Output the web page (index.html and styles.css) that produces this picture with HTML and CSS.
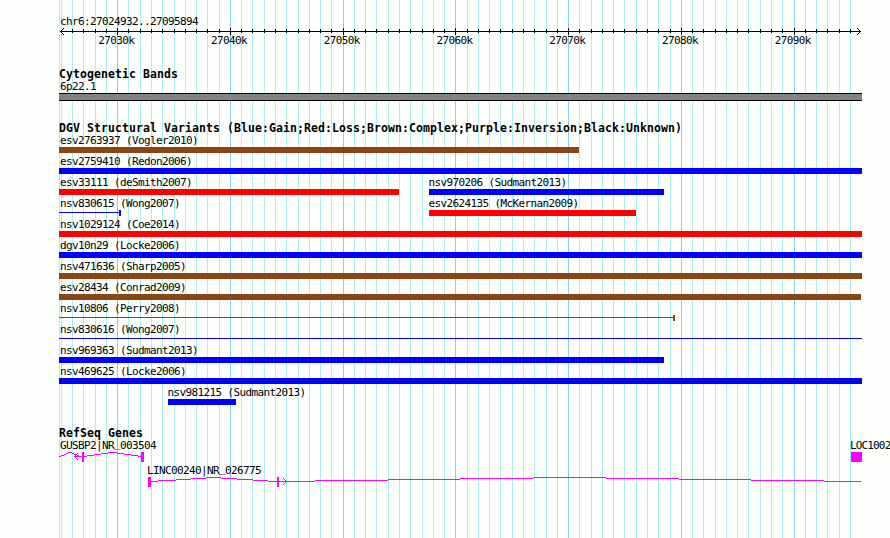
FILE: index.html
```html
<!DOCTYPE html>
<html lang="en">

<head>
    <meta charset="UTF-8">
    <title>chr6:27024932..27095894</title>
    <link rel="stylesheet" href="styles.css">
</head>

<body>
    <div class="browser">
        <svg class="gridlines" id="gridlines" width="890" height="538" shape-rendering="crispEdges"></svg>

        <div class="ruler">
            <div class="label">chr6:27024932..27095894</div>
            <svg class="axis" id="axis" width="803" height="7" shape-rendering="crispEdges">
                <path d="M1 3h801v1h-801z" />
                <path d="M2 2h1v1h-1zM3 1h1v1h-1zM4 0h1v1h-1zM2 4h1v1h-1zM3 5h1v1h-1zM4 6h1v1h-1z" />
                <path d="M800 2h1v1h-1zM799 1h1v1h-1zM798 0h1v1h-1zM800 4h1v1h-1zM799 5h1v1h-1zM798 6h1v1h-1z" />
            </svg>
            <div class="ticks">
                <span class="label">27030k</span>
                <span class="label">27040k</span>
                <span class="label">27050k</span>
                <span class="label">27060k</span>
                <span class="label">27070k</span>
                <span class="label">27080k</span>
                <span class="label">27090k</span>
            </div>
        </div>

        <div class="track cytoband">
            <h2>Cytogenetic Bands</h2>
            <div class="label">6p22.1</div>
            <div class="band"></div>
        </div>

        <div class="track variants">
            <h2>DGV Structural Variants (Blue:Gain;Red:Loss;Brown:Complex;Purple:Inversion;Black:Unknown)</h2>
            <div id="variants"></div>
        </div>

        <div class="track genes">
            <h2>RefSeq Genes</h2>
            <div class="gene-row">
                <span class="label">GUSBP2|NR<span class="low">_</span>003504</span>
                <span class="label">LOC1002</span>
            </div>
            <svg class="gene" width="803" height="12" shape-rendering="crispEdges">
                <path d="M0 4h2v1h-2zM2 3h3v1h-3zM5 2h2v1h-2zM7 1h2v1h-2zM9 0h4v1h-4zM13 1h2v1h-2zM15 2h3v1h-3zM18 3h2v1h-2zM15 4h8v1h-8z" />
                <path d="M16 3h1v1h-1zM17 2h1v1h-1zM18 1h1v1h-1zM16 5h1v1h-1zM17 6h1v1h-1zM18 7h1v1h-1z" />
                <path d="M25 4h3v1h-3zM28 3h7v1h-7zM35 2h7v1h-7zM42 1h7v1h-7zM49 0h9v1h-9zM58 1h7v1h-7zM65 2h7v1h-7zM72 3h7v1h-7zM79 4h3v1h-3z" />
                <path d="M23 0h2v10h-2zM82 0h3v10h-3zM792 0h11v10h-11z" />
            </svg>
            <div class="gene-row second">
                <span class="label">LINC00240|NR<span class="low">_</span>026775</span>
            </div>
            <svg class="gene" width="803" height="12" shape-rendering="crispEdges">
                <path d="M92 4h7v1h-7zM99 3h18v1h-18zM117 2h15v1h-15zM132 1h15v1h-15zM147 0h15v1h-15zM162 1h16v1h-16zM178 2h16v1h-16zM194 3h15v1h-15zM209 4h9v1h-9z" />
                <path d="M220 4h36v1h-36zM256 3h73v1h-73zM329 2h72v1h-72zM401 1h73v1h-73zM474 0h73v1h-73zM547 1h73v1h-73zM620 2h72v1h-72zM692 3h73v1h-73zM765 4h37v1h-37z" />
                <path d="M224 1h1v1h-1zM225 2h1v1h-1zM226 3h1v1h-1zM227 4h1v1h-1zM226 5h1v1h-1zM225 6h1v1h-1zM224 7h1v1h-1z" />
                <path d="M89 0h3v10h-3zM218 0h2v10h-2z" />
            </svg>
        </div>
    </div>

    <script src="script.js"></script>
</body>

</html>
```
FILE: styles.css
```css
body {
    margin: 0;
    background-color: #fdfffc;
    color: #000;
    font-family: "DejaVu Sans Mono", monospace;
}

.browser {
    position: relative;
    width: 831px;
    height: 538px;
    padding-left: 59px;
    overflow: hidden;
}

svg {
    display: block;
}

.gridlines {
    position: absolute;
    top: 0;
    left: 0;
    z-index: -1;
}

.gridlines .minor {
    fill: #afeeee;
}

.gridlines .major {
    fill: #87ceeb;
}

.label {
    display: block;
    height: 13px;
    padding-left: 1px;
    font-size: 11px;
    line-height: 13px;
    letter-spacing: -0.622px;
    white-space: nowrap;
}

h2 {
    height: 13px;
    margin: 0;
    font-size: 11.5px;
    line-height: 15px;
    letter-spacing: 0.077px;
    white-space: nowrap;
}

/* ruler */
.ruler {
    box-sizing: border-box;
    height: 67px;
    padding-top: 15px;
}

.ticks {
    display: flex;
    padding-left: 1px;
}

.ticks .label {
    flex: none;
    width: 112.74px;
    padding: 0;
    line-height: 11px;
    text-align: center;
}

/* tracks */
.cytoband {
    height: 54px;
}

.band {
    width: 803px;
    height: 6px;
    border-top: 1px solid #000;
    border-bottom: 1px solid #000;
    background-color: #848284;
}

.variants {
    height: 305px;
}

.row {
    display: flex;
    height: 21px;
}

.feature {
    flex: none;
}

.feature.inside .label {
    padding-left: 0;
    margin-left: -0.5px;
}

.bar {
    height: 6px;
    background-color: currentColor;
}

.line {
    display: flex;
    align-items: flex-start;
    height: 6px;
}

.line::before {
    content: "";
    flex: 1;
    height: 1px;
    margin-top: 2px;
    background-color: currentColor;
}

.line.capped::after {
    content: "";
    width: 2px;
    height: 6px;
    background-color: currentColor;
}

.gain {
    color: #00f;
}

.loss {
    color: #f00;
}

.complex {
    color: #8b4513;
}

/* genes */
.gene {
    fill: #f0f;
}

.gene-row {
    display: flex;
    justify-content: space-between;
}

.gene-row .label + .label {
    width: 40px;
    letter-spacing: -0.85px;
}

.gene-row.second {
    padding-left: 87px;
}

/* lift the underscore clear of the gene below */
.low {
    position: relative;
    top: -2px;
}
```
FILE: script.js
```js
var ns = 'http://www.w3.org/2000/svg';
var grid = document.getElementById('gridlines');
var axis = document.getElementById('axis');
var left = 59;

function rect(parent, x, y, h, cls) {
    var r = document.createElementNS(ns, 'rect');
    r.setAttribute('x', x);
    r.setAttribute('y', y);
    r.setAttribute('width', 1);
    r.setAttribute('height', h);
    r.setAttribute('class', cls);
    parent.appendChild(r);
}

// one line per kilobase, starting at 27025k
rect(grid, left, 0, 538, 'minor');
for (var k = 0; k <= 70; k++) {
    var x = Math.floor(61.3 + k * 11.2737);
    var major = k % 10 === 5;
    rect(grid, x, 0, 538, major ? 'major' : 'minor');
    if (k > 0) {
        rect(axis, x - left, major ? 0 : 1, major ? 7 : 4, 'tick');
    }
}

// name, start, end, type, shape
var rows = [
    [['esv2763937 (Vogler2010)', 59, 579, 'complex', 'bar']],
    [['esv2759410 (Redon2006)', 59, 862, 'gain', 'bar']],
    [['esv33111 (deSmith2007)', 59, 399, 'loss', 'bar'], ['nsv970206 (Sudmant2013)', 429, 664, 'gain', 'bar']],
    [['nsv830615 (Wong2007)', 59, 121, 'gain', 'line capped'], ['esv2624135 (McKernan2009)', 429, 636, 'loss', 'bar']],
    [['nsv1029124 (Coe2014)', 59, 862, 'loss', 'bar']],
    [['dgv10n29 (Locke2006)', 59, 862, 'gain', 'bar']],
    [['nsv471636 (Sharp2005)', 59, 862, 'complex', 'bar']],
    [['esv28434 (Conrad2009)', 59, 861, 'complex', 'bar']],
    [['nsv10806 (Perry2008)', 59, 675, 'complex', 'line capped']],
    [['nsv830616 (Wong2007)', 59, 862, 'gain', 'line']],
    [['nsv969363 (Sudmant2013)', 59, 664, 'gain', 'bar']],
    [['nsv469625 (Locke2006)', 59, 862, 'gain', 'bar']],
    [['nsv981215 (Sudmant2013)', 168, 236, 'gain', 'bar']]
];

var html = '';
rows.forEach(function (row) {
    var pos = left;
    html += '<div class="row">';
    row.forEach(function (f) {
        html += '<div class="feature' + (f[1] > left ? ' inside' : '') + '" style="margin-left:' + (f[1] - pos) + 'px;width:' + (f[2] - f[1]) + 'px">' +
            '<div class="label">' + f[0] + '</div>' +
            '<div class="' + f[4] + ' ' + f[3] + '"></div></div>';
        pos = f[2];
    });
    html += '</div>';
});
document.getElementById('variants').innerHTML = html;
```
